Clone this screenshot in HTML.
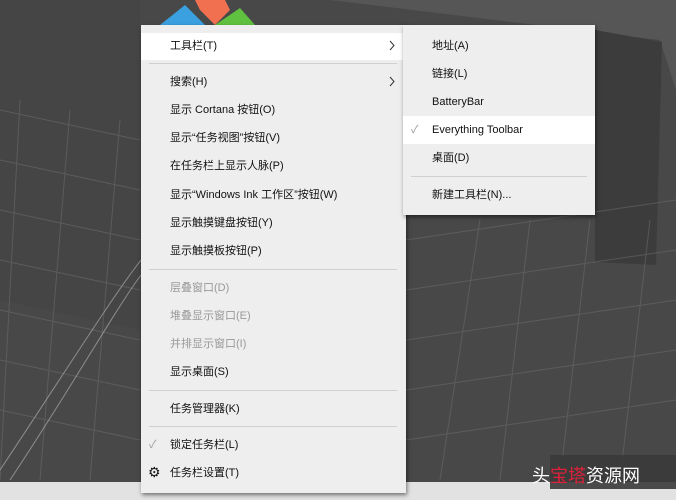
<!DOCTYPE html><html><head><meta charset="utf-8"><style>
body{margin:0;width:676px;height:500px;overflow:hidden;position:relative;background:#444;font-family:"Liberation Sans","Noto Sans CJK SC",sans-serif;}
.m{position:absolute;background:#eeeeee;box-shadow:1px 2px 4px rgba(0,0,0,.5);}
.i{position:absolute;font-size:11px;color:#111;white-space:nowrap;line-height:14px}
.g{color:#999}
.s{position:absolute;height:1px;background:#cfcfcf}
.h{position:absolute;background:#fff}
.c{position:absolute}
</style></head><body>
<svg width="676" height="500" style="position:absolute;left:0;top:0">
<rect width="676" height="500" fill="#484848"/>
<polygon points="0,0 140,0 140,330 0,300" fill="#454545"/>
<polygon points="330,0 676,0 676,90 660,40" fill="#565656"/>
<polygon points="595,30 662,42 656,265 595,262" fill="#3c3c3c"/>
<g stroke="#6a6a6a" stroke-width="1" opacity=".6">
<line x1="0" y1="110" x2="140" y2="140"/><line x1="0" y1="160" x2="140" y2="190"/><line x1="0" y1="210" x2="140" y2="240"/><line x1="0" y1="260" x2="140" y2="290"/><line x1="0" y1="310" x2="140" y2="340"/><line x1="0" y1="360" x2="140" y2="390"/><line x1="0" y1="410" x2="140" y2="440"/>
<line x1="20" y1="100" x2="0" y2="480"/><line x1="70" y1="110" x2="40" y2="480"/><line x1="120" y1="120" x2="90" y2="480"/>
<line x1="406" y1="240" x2="676" y2="200"/><line x1="406" y1="290" x2="676" y2="250"/><line x1="406" y1="340" x2="676" y2="300"/><line x1="406" y1="390" x2="676" y2="350"/><line x1="406" y1="440" x2="676" y2="400"/>
<line x1="440" y1="480" x2="480" y2="220"/><line x1="500" y1="480" x2="530" y2="220"/><line x1="560" y1="480" x2="590" y2="220"/><line x1="620" y1="480" x2="650" y2="220"/>
</g>
<g stroke="#bbb" fill="none" stroke-width="1" opacity=".6"><path d="M0,470 C60,380 110,300 141,260"/><path d="M10,480 C70,390 115,310 141,275"/></g>
<polygon points="160,25 185,5 205,25" fill="#3aa0e0"/>
<polygon points="195,0 225,0 230,10 215,25 200,10" fill="#f07050"/>
<polygon points="215,25 240,8 255,25" fill="#60c040"/>
<rect x="0" y="482" width="676" height="18" fill="#e2e2e2"/>
<rect x="550" y="455" width="126" height="34" fill="#3a3a3a" opacity=".9"/>
</svg>
<div style="position:absolute;left:532px;top:462px;font-size:18px;color:#fff;white-space:nowrap;font-family:'Noto Sans CJK SC',sans-serif">头<span style="color:#e0203a">宝塔</span>资源网</div>
<div class="m" style="left:141px;top:25px;width:265px;height:468px">
<div class="h" style="left:0;top:8px;width:265px;height:27px"></div>
<div class="i" style="left:29px;top:14px">工具栏(T)</div>
<svg class="c" style="left:248px;top:15px" width="6" height="11"><path d="M1,1 L5,5.5 L1,10" stroke="#333" fill="none"/></svg>
<div class="s" style="left:8px;top:38px;width:248px"></div>
<div class="i" style="left:29px;top:50px">搜索(H)</div>
<svg class="c" style="left:248px;top:51px" width="6" height="11"><path d="M1,1 L5,5.5 L1,10" stroke="#333" fill="none"/></svg>
<div class="i" style="left:29px;top:78px">显示 Cortana 按钮(O)</div>
<div class="i" style="left:29px;top:106px">显示“任务视图”按钮(V)</div>
<div class="i" style="left:29px;top:134px">在任务栏上显示人脉(P)</div>
<div class="i" style="left:29px;top:163px">显示“Windows Ink 工作区”按钮(W)</div>
<div class="i" style="left:29px;top:191px">显示触摸键盘按钮(Y)</div>
<div class="i" style="left:29px;top:219px">显示触摸板按钮(P)</div>
<div class="s" style="left:8px;top:244px;width:248px"></div>
<div class="i g" style="left:29px;top:256px">层叠窗口(D)</div>
<div class="i g" style="left:29px;top:284px">堆叠显示窗口(E)</div>
<div class="i g" style="left:29px;top:312px">并排显示窗口(I)</div>
<div class="i" style="left:29px;top:340px">显示桌面(S)</div>
<div class="s" style="left:8px;top:365px;width:248px"></div>
<div class="i" style="left:29px;top:377px">任务管理器(K)</div>
<div class="s" style="left:8px;top:401px;width:248px"></div>
<div class="i g" style="left:8px;top:413px">✓</div><div class="i" style="left:29px;top:413px">锁定任务栏(L)</div>
<div class="i" style="left:7px;top:440px;font-size:14px">⚙</div><div class="i" style="left:29px;top:441px">任务栏设置(T)</div>
</div>
<div class="m" style="left:403px;top:25px;width:192px;height:190px">
<div class="h" style="left:0;top:91px;width:192px;height:28px"></div>
<div class="i" style="left:29px;top:14px">地址(A)</div>
<div class="i" style="left:29px;top:42px">链接(L)</div>
<div class="i" style="left:29px;top:70px">BatteryBar</div>
<div class="i g" style="left:8px;top:98px">✓</div><div class="i" style="left:29px;top:98px">Everything Toolbar</div>
<div class="i" style="left:29px;top:126px">桌面(D)</div>
<div class="s" style="left:8px;top:151px;width:176px"></div>
<div class="i" style="left:29px;top:163px">新建工具栏(N)...</div>
</div>
</body></html>
